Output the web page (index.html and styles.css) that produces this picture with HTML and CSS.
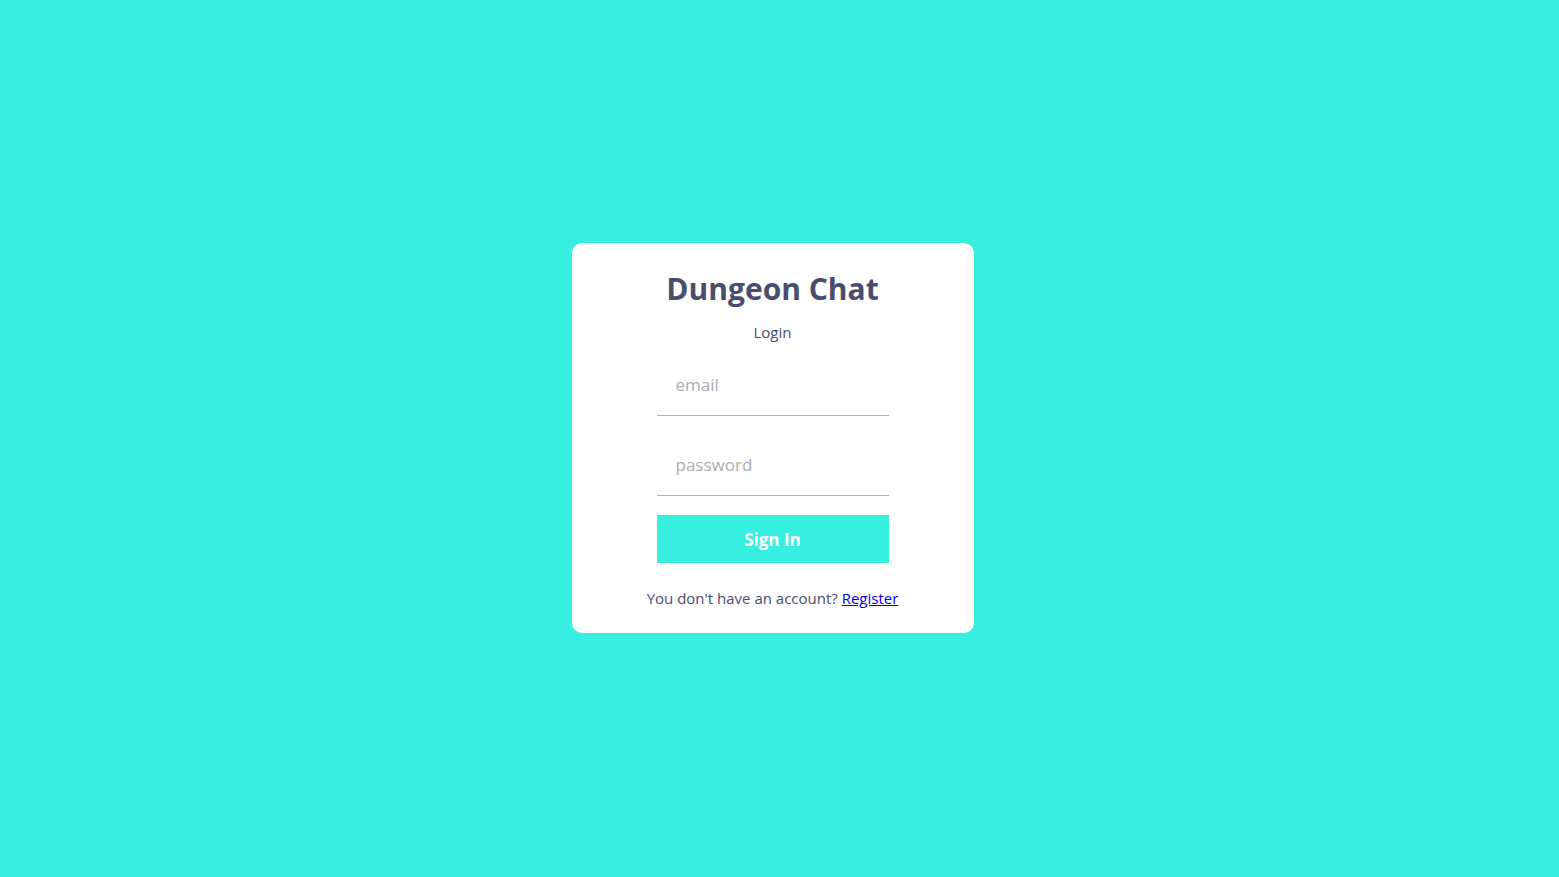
FILE: index.html
```html
<!DOCTYPE html>
<html lang="en">
<head>
<meta charset="utf-8">
<title>Dungeon Chat</title>
<link rel="stylesheet" href="styles.css">
</head>
<body>
<main class="page">
  <form class="card">
    <h1 class="title">Dungeon Chat</h1>
    <p class="subtitle">Login</p>
    <input class="field" type="email" placeholder="email">
    <input class="field" type="password" placeholder="password">
    <button class="btn" type="button">Sign In</button>
    <p class="footer">You don't have an account? <a href="#" class="link">Register</a></p>
  </form>
</main>
</body>
</html>
```

FILE: styles.css
```css
html, body {
  margin: 0;
  padding: 0;
  height: 100%;
}
body {
  background: #37efe0;
  font-family: "Open Sans", "Noto Sans", sans-serif;
  color: #4a4e6e;
}
.page {
  height: 100%;
  box-sizing: border-box;
  padding-right: 14px;
  display: flex;
  align-items: center;
  justify-content: center;
}
.card {
  width: 402px;
  height: 390px;
  box-sizing: border-box;
  background: #fff;
  border-radius: 10px;
  display: flex;
  flex-direction: column;
  align-items: center;
  padding-top: 26px;
  margin-top: -1px;
}
.title {
  margin: 0;
  font-size: 30px;
  font-weight: 700;
  line-height: 40px;
  color: #4a4e6e;
}
.subtitle {
  margin: 13px 0 0;
  font-size: 15px;
  line-height: 20px;
}
.field {
  width: 232px;
  height: 56px;
  box-sizing: border-box;
  margin-top: 18px;
  border: none;
  border-bottom: 1px solid #3fe2d6;
  padding: 0 19px 6px;
  font-family: inherit;
  font-size: 17px;
  color: #4a4e6e;
  outline: none;
  background: transparent;
}
.field + .field {
  margin-top: 24px;
}
.field::placeholder {
  color: #ababb3;
}
.btn {
  margin-top: 19px;
  width: 232px;
  height: 48px;
  border: none;
  background: #37efe0;
  color: #fff;
  font-family: inherit;
  font-size: 17px;
  font-weight: 700;
  cursor: pointer;
}
.footer {
  margin: 25px 0 0;
  font-size: 15px;
  line-height: 20px;
}
.link {
  color: #0000ee;
}
```
